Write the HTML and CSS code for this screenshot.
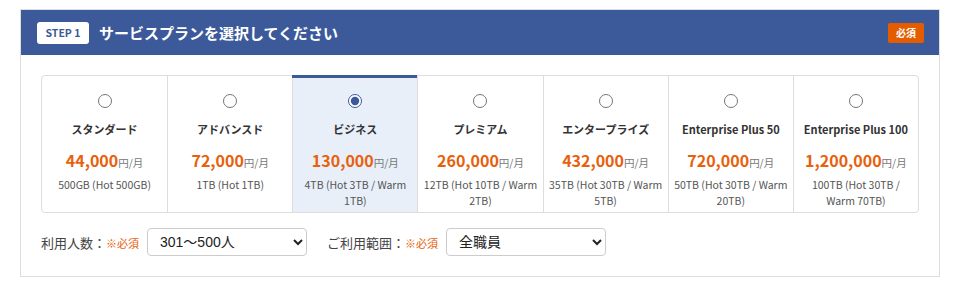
FILE: index.html
```html
<!DOCTYPE html>
<html lang="ja">
<head>
    <meta charset="UTF-8">
    <meta name="viewport" content="width=device-width, initial-scale=1.0">
    <title>サービスプラン選択</title>
    <link rel="stylesheet" href="styles.css">
</head>
<body>
    <div class="step-box">
        <header class="step-header">
            <span class="step-label">STEP 1</span>
            <h2 class="step-title">サービスプランを選択してください</h2>
            <span class="required-badge">必須</span>
        </header>
        <div class="step-body">
            <div class="plans">
                <label class="plan">
                    <input type="radio" name="plan">
                    <span class="plan-name">スタンダード</span>
                    <span class="plan-price">44,000<small>円/月</small></span>
                    <span class="plan-storage">500GB (Hot 500GB)</span>
                </label>
                <label class="plan">
                    <input type="radio" name="plan">
                    <span class="plan-name">アドバンスド</span>
                    <span class="plan-price">72,000<small>円/月</small></span>
                    <span class="plan-storage">1TB (Hot 1TB)</span>
                </label>
                <label class="plan selected">
                    <input type="radio" name="plan" checked>
                    <span class="plan-name">ビジネス</span>
                    <span class="plan-price">130,000<small>円/月</small></span>
                    <span class="plan-storage">4TB (Hot 3TB / Warm 1TB)</span>
                </label>
                <label class="plan">
                    <input type="radio" name="plan">
                    <span class="plan-name">プレミアム</span>
                    <span class="plan-price">260,000<small>円/月</small></span>
                    <span class="plan-storage">12TB (Hot 10TB / Warm 2TB)</span>
                </label>
                <label class="plan">
                    <input type="radio" name="plan">
                    <span class="plan-name">エンタープライズ</span>
                    <span class="plan-price">432,000<small>円/月</small></span>
                    <span class="plan-storage">35TB (Hot 30TB / Warm 5TB)</span>
                </label>
                <label class="plan">
                    <input type="radio" name="plan">
                    <span class="plan-name">Enterprise Plus 50</span>
                    <span class="plan-price">720,000<small>円/月</small></span>
                    <span class="plan-storage">50TB (Hot 30TB / Warm 20TB)</span>
                </label>
                <label class="plan">
                    <input type="radio" name="plan">
                    <span class="plan-name">Enterprise Plus 100</span>
                    <span class="plan-price">1,200,000<small>円/月</small></span>
                    <span class="plan-storage">100TB (Hot 30TB / Warm 70TB)</span>
                </label>
            </div>
            <div class="form-row">
                <label class="field-label">利用人数：<span class="must">※必須</span></label>
                <select class="field-select">
                    <option>301〜500人</option>
                </select>
                <label class="field-label second">ご利用範囲：<span class="must">※必須</span></label>
                <select class="field-select">
                    <option>全職員</option>
                </select>
            </div>
        </div>
    </div>
</body>
</html>
```

FILE: styles.css
```css
* {
    margin: 0;
    padding: 0;
    box-sizing: border-box;
}

body {
    font-family: "Noto Sans CJK JP", "Noto Sans", sans-serif;
    color: #333;
    background: #fff;
}

.step-box {
    width: 920px;
    margin: 9px 0 0 20px;
    border: 1px solid #ddd;
}

.step-header {
    display: flex;
    align-items: center;
    height: 45px;
    padding: 0 15px 0 16px;
    background: #3c5a99;
    color: #fff;
}

.step-label {
    display: inline-flex;
    align-items: center;
    justify-content: center;
    width: 52px;
    height: 22px;
    background: #fff;
    color: #3c5a99;
    border-radius: 3px;
    font-size: 10.5px;
    font-weight: 700;
}

.step-title {
    flex: 1;
    margin-left: 10px;
    font-size: 15px;
    font-weight: 700;
}

.required-badge {
    display: inline-flex;
    align-items: center;
    justify-content: center;
    width: 36px;
    height: 20px;
    background: #e35d00;
    border-radius: 2px;
    font-size: 10px;
    font-weight: 700;
}

.step-body {
    padding: 20px;
}

.plans {
    display: grid;
    grid-template-columns: repeat(7, 1fr);
    border: 1px solid #ddd;
    border-radius: 4px;
}

.plan {
    position: relative;
    display: flex;
    flex-direction: column;
    align-items: center;
    height: 136px;
    padding: 18px 2px 0;
    border-left: 1px solid #ddd;
    text-align: center;
    cursor: pointer;
}

.plan:first-child {
    border-left: none;
}

.plan.selected {
    background: #e8eff9;
}

.plan.selected::before {
    content: "";
    position: absolute;
    top: -1px;
    left: -1px;
    right: 0;
    height: 3px;
    background: #3c5a99;
}

.plan input {
    width: 14px;
    height: 14px;
    margin: 0;
    accent-color: #3c5a99;
}

.plan-name {
    margin-top: 12px;
    font-size: 11px;
    line-height: 18px;
    font-weight: 700;
    color: #333;
}

.plan-price {
    margin-top: 11px;
    font-size: 16px;
    line-height: 22px;
    font-weight: 700;
    color: #e8600a;
}

.plan-price small {
    font-size: 10.5px;
    font-weight: 400;
    color: #777;
}

.plan-storage {
    margin-top: 3px;
    padding: 0 2px;
    font-size: 10.5px;
    line-height: 16px;
    color: #555;
}

.form-row {
    display: flex;
    align-items: center;
    margin-top: 15px;
}

.field-label {
    font-size: 13px;
    color: #444;
}

.field-label.second {
    margin-left: 20px;
}

.must {
    font-size: 11px;
    color: #e8600a;
}

.field-select {
    width: 160px;
    height: 28px;
    margin-left: 8px;
    padding: 0 8px;
    border: 1px solid #ccc;
    border-radius: 4px;
    background: #fff;
    font-family: "Liberation Sans", "Noto Sans CJK JP", sans-serif;
    font-size: 14px;
    color: #222;
}
```
